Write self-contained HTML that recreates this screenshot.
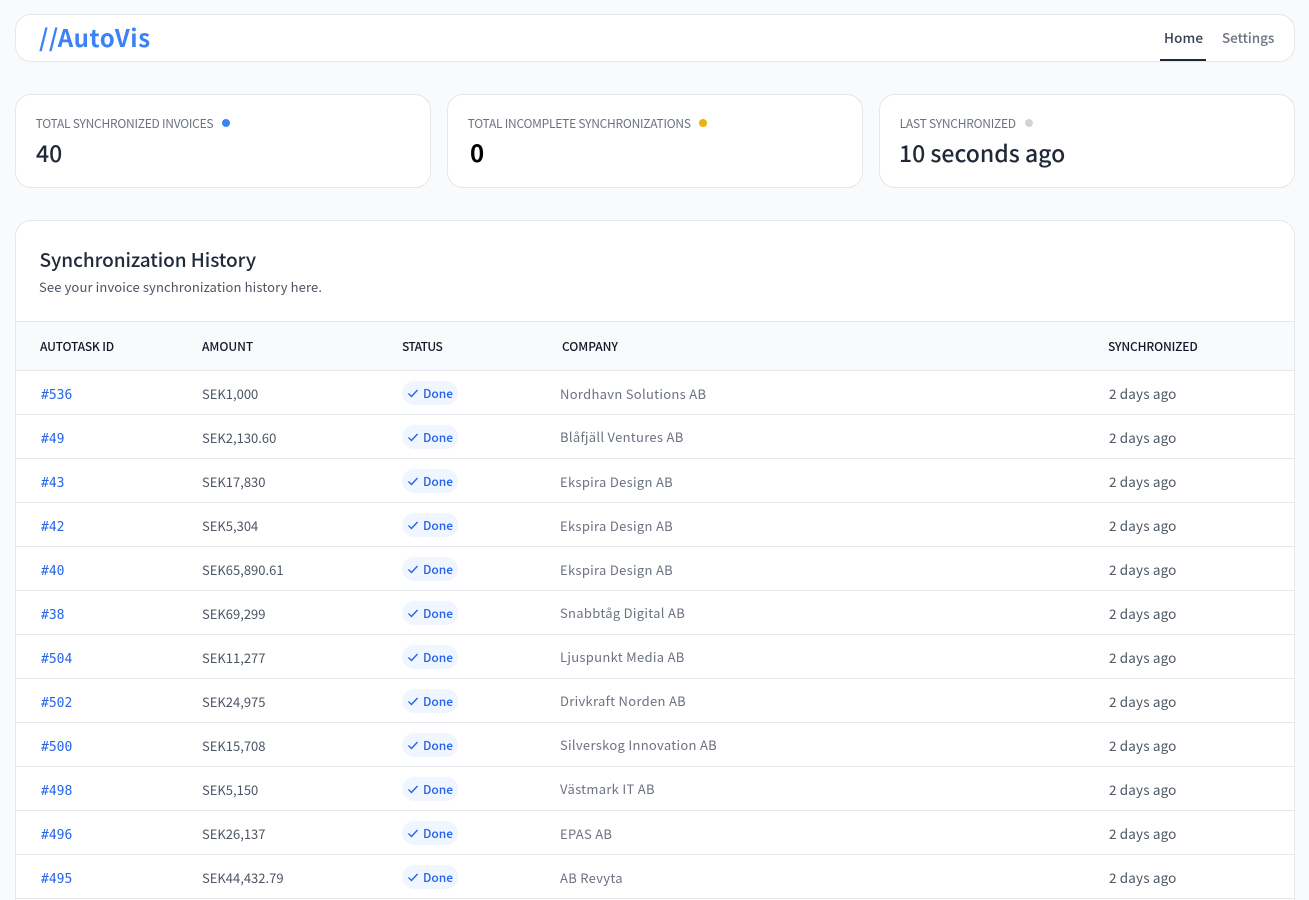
<!DOCTYPE html>
<html lang="en"><head><meta charset="utf-8"><title>AutoVis</title>
<style>
*{box-sizing:border-box}
html,body{margin:0;padding:0;width:1309px;height:900px;overflow:hidden;background:#f9fafb}
body{position:relative;font-family:"Noto Sans CJK JP","Liberation Sans",sans-serif;color:#1f2937}
.box{position:absolute;background:#fff;border:1px solid #e5e7eb}
.t{position:absolute;white-space:nowrap;line-height:20px}
.lab{font-size:12px;color:#6b7280;top:114px;letter-spacing:-.24px}
.val{font-size:23px;font-weight:500;top:135px;line-height:34px;letter-spacing:0}
.dot{position:absolute;width:8px;height:8px;border-radius:50%;top:119px}
.th{font-size:12px;font-weight:500;color:#111827;top:337px;letter-spacing:-.05px}
.row{position:absolute;left:16px;width:1278px;height:44px;border-bottom:1px solid #e5e7eb}
.row span{position:absolute;white-space:nowrap;line-height:20px;top:13px}
.row .id{left:25px;top:15px;font:13px/20px "DejaVu Sans Mono","Liberation Mono",monospace;color:#2563eb}
.amt{left:186px;font-size:13px;color:#4b5563}
.co{left:544px;font-size:13px;color:#6b7280;letter-spacing:.3px}
.row .up{top:12px}
.row .syn{left:1093px;top:12px;font-size:13.5px;color:#4b5563;letter-spacing:.14px}
.row .pill{left:386px;top:11px;width:56px;height:24px;margin-top:-1px;border-radius:12px;background:#eff6ff;color:#2563eb;font-size:12px;font-weight:500;line-height:26px;padding-left:21px;letter-spacing:0}
.pill svg{position:absolute;left:5px;top:6px}
</style></head><body>
<div class="box" style="left:15px;top:14px;width:1280px;height:48px;border-radius:16px"></div>
<div class="t" style="left:39px;top:21px;line-height:32px;font-size:24px;font-weight:700;color:#3b82f6;letter-spacing:.6px">//AutoVis</div>
<div class="t" style="left:1164px;top:27px;font-size:13.5px;font-weight:500;color:#374151;letter-spacing:.1px">Home</div>
<div class="t" style="left:1222px;top:27px;font-size:13.5px;font-weight:500;color:#6b7280;letter-spacing:-.05px">Settings</div>
<div style="position:absolute;left:1160px;top:59px;width:46px;height:2px;background:#1f2937"></div>

<div class="box" style="left:15px;top:94px;width:416px;height:94px;border-radius:16px"></div>
<div class="box" style="left:447px;top:94px;width:416px;height:94px;border-radius:16px"></div>
<div class="box" style="left:879px;top:94px;width:416px;height:94px;border-radius:16px"></div>
<div class="t lab" style="left:35.6px">TOTAL SYNCHRONIZED INVOICES</div><div class="dot" style="left:222px;background:#3b82f6"></div>
<div class="t lab" style="left:467.6px">TOTAL INCOMPLETE SYNCHRONIZATIONS</div><div class="dot" style="left:699px;background:#eab308"></div>
<div class="t lab" style="left:899.6px">LAST SYNCHRONIZED</div><div class="dot" style="left:1025px;background:#d1d5db"></div>
<div class="t val" style="left:36px">40</div>
<div class="t val" style="left:470px;color:#000;font-weight:700;font-size:24px">0</div>
<div class="t val" style="left:899px">10 seconds ago</div>

<div class="box" style="left:15px;top:220px;width:1280px;height:700px;border-radius:16px 16px 0 0"></div>
<div class="t" style="left:39.5px;top:246px;line-height:28px;font-size:19px;font-weight:500;color:#1f2937;letter-spacing:-.06px">Synchronization History</div>
<div class="t" style="left:39px;top:277px;font-size:13px;color:#4b5563;letter-spacing:.13px">See your invoice synchronization history here.</div>
<div style="position:absolute;left:16px;top:321px;width:1278px;height:50px;background:#f9fafb;border-top:1px solid #e5e7eb;border-bottom:1px solid #e5e7eb"></div>
<div class="t th" style="left:40px;letter-spacing:-.2px">AUTOTASK ID</div>
<div class="t th" style="left:202px">AMOUNT</div>
<div class="t th" style="left:402px;letter-spacing:-.6px">STATUS</div>
<div class="t th" style="left:562px">COMPANY</div>
<div class="t th" style="left:1108px;letter-spacing:-.16px">SYNCHRONIZED</div>

<div class="row" style="top:371px"><span class="id">#536</span><span class="amt">SEK1,000</span><span class="pill"><svg width="12" height="12" viewBox="0 0 12 12"><path d="M1.5 6.5 4.5 9.5 10.5 3" fill="none" stroke="#2563eb" stroke-width="1.4"/></svg>Done</span><span class="co">Nordhavn Solutions AB</span><span class="syn">2 days ago</span></div>
<div class="row" style="top:415px"><span class="id">#49</span><span class="amt">SEK2,130.60</span><span class="pill"><svg width="12" height="12" viewBox="0 0 12 12"><path d="M1.5 6.5 4.5 9.5 10.5 3" fill="none" stroke="#2563eb" stroke-width="1.4"/></svg>Done</span><span class="co up">Blåfjäll Ventures AB</span><span class="syn">2 days ago</span></div>
<div class="row" style="top:459px"><span class="id">#43</span><span class="amt">SEK17,830</span><span class="pill"><svg width="12" height="12" viewBox="0 0 12 12"><path d="M1.5 6.5 4.5 9.5 10.5 3" fill="none" stroke="#2563eb" stroke-width="1.4"/></svg>Done</span><span class="co">Ekspira Design AB</span><span class="syn">2 days ago</span></div>
<div class="row" style="top:503px"><span class="id">#42</span><span class="amt">SEK5,304</span><span class="pill"><svg width="12" height="12" viewBox="0 0 12 12"><path d="M1.5 6.5 4.5 9.5 10.5 3" fill="none" stroke="#2563eb" stroke-width="1.4"/></svg>Done</span><span class="co">Ekspira Design AB</span><span class="syn">2 days ago</span></div>
<div class="row" style="top:547px"><span class="id">#40</span><span class="amt">SEK65,890.61</span><span class="pill"><svg width="12" height="12" viewBox="0 0 12 12"><path d="M1.5 6.5 4.5 9.5 10.5 3" fill="none" stroke="#2563eb" stroke-width="1.4"/></svg>Done</span><span class="co">Ekspira Design AB</span><span class="syn">2 days ago</span></div>
<div class="row" style="top:591px"><span class="id">#38</span><span class="amt">SEK69,299</span><span class="pill"><svg width="12" height="12" viewBox="0 0 12 12"><path d="M1.5 6.5 4.5 9.5 10.5 3" fill="none" stroke="#2563eb" stroke-width="1.4"/></svg>Done</span><span class="co up">Snabbtåg Digital AB</span><span class="syn">2 days ago</span></div>
<div class="row" style="top:635px"><span class="id">#504</span><span class="amt">SEK11,277</span><span class="pill"><svg width="12" height="12" viewBox="0 0 12 12"><path d="M1.5 6.5 4.5 9.5 10.5 3" fill="none" stroke="#2563eb" stroke-width="1.4"/></svg>Done</span><span class="co up">Ljuspunkt Media AB</span><span class="syn">2 days ago</span></div>
<div class="row" style="top:679px"><span class="id">#502</span><span class="amt">SEK24,975</span><span class="pill"><svg width="12" height="12" viewBox="0 0 12 12"><path d="M1.5 6.5 4.5 9.5 10.5 3" fill="none" stroke="#2563eb" stroke-width="1.4"/></svg>Done</span><span class="co up">Drivkraft Norden AB</span><span class="syn">2 days ago</span></div>
<div class="row" style="top:723px"><span class="id">#500</span><span class="amt">SEK15,708</span><span class="pill"><svg width="12" height="12" viewBox="0 0 12 12"><path d="M1.5 6.5 4.5 9.5 10.5 3" fill="none" stroke="#2563eb" stroke-width="1.4"/></svg>Done</span><span class="co up">Silverskog Innovation AB</span><span class="syn">2 days ago</span></div>
<div class="row" style="top:767px"><span class="id">#498</span><span class="amt">SEK5,150</span><span class="pill"><svg width="12" height="12" viewBox="0 0 12 12"><path d="M1.5 6.5 4.5 9.5 10.5 3" fill="none" stroke="#2563eb" stroke-width="1.4"/></svg>Done</span><span class="co up">Västmark IT AB</span><span class="syn">2 days ago</span></div>
<div class="row" style="top:811px"><span class="id">#496</span><span class="amt">SEK26,137</span><span class="pill"><svg width="12" height="12" viewBox="0 0 12 12"><path d="M1.5 6.5 4.5 9.5 10.5 3" fill="none" stroke="#2563eb" stroke-width="1.4"/></svg>Done</span><span class="co">EPAS AB</span><span class="syn">2 days ago</span></div>
<div class="row" style="top:855px"><span class="id">#495</span><span class="amt">SEK44,432.79</span><span class="pill"><svg width="12" height="12" viewBox="0 0 12 12"><path d="M1.5 6.5 4.5 9.5 10.5 3" fill="none" stroke="#2563eb" stroke-width="1.4"/></svg>Done</span><span class="co">AB Revyta</span><span class="syn">2 days ago</span></div>
</body></html>
